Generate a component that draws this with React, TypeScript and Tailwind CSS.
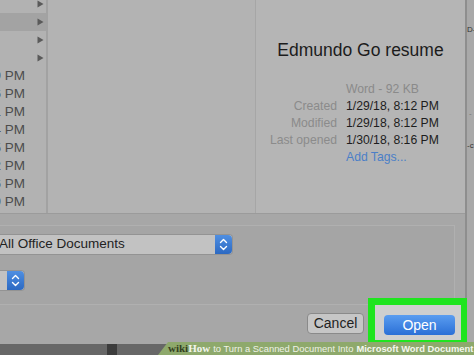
import React from 'react';

// left browser column: 4 folder rows + 8 file rows (only the tail of the date shows)
const folderRows = [false, true, false, false];
const timeRows = ['8:49 PM', '5:36 PM', '4:11 PM', '2:44 PM', '7:25 PM', '3:52 PM', '6:16 PM', '1:59 PM'];

const meta = [
  { label: 'Created', value: '1/29/18, 8:12 PM' },
  { label: 'Modified', value: '1/29/18, 8:12 PM' },
  { label: 'Last opened', value: '1/30/18, 8:16 PM' },
];

const Stepper = () => (
  <div className="w-[17px] h-full rounded-r-[4px] bg-gradient-to-b from-[#4f8fe2] to-[#2c69c2] flex items-center justify-center">
    <svg width="9" height="13" viewBox="0 0 9 13" fill="none" stroke="#ffffff" strokeWidth="1.4" strokeLinecap="round" strokeLinejoin="round">
      <path d="M1.5 4.5 L4.5 1.5 L7.5 4.5" />
      <path d="M1.5 8.5 L4.5 11.5 L7.5 8.5" />
    </svg>
  </div>
);

const Arrow = () => (
  <svg width="7" height="8" viewBox="0 0 7 8">
    <path d="M0.5 0.5 L6.5 4 L0.5 7.5 Z" fill="#5a5a5a" />
  </svg>
);

export default function App() {
  return (
    <div className="relative w-[474px] h-[355px] overflow-hidden bg-[#656565] font-['Liberation_Sans',Arial,sans-serif]">
      <div className="flex h-[344px]">
        {/* dialog */}
        <div className="w-[467px] flex flex-col border-r-2 border-[#8e8e8e]">
          <div className="h-[214px] flex border-b border-[#9b9b9b] bg-[#b4b4b4]">
            <div className="w-[48px] border-r-2 border-[#a2a2a2] bg-[#b2b2b2] overflow-hidden">
              <div className="mt-[-5px]">
                {folderRows.map((sel, i) => (
                  <div key={i} className={`h-[18px] flex items-center justify-end pr-[2px] ${sel ? 'bg-[#a3a3a3]' : ''}`}>
                    <Arrow />
                  </div>
                ))}
                {timeRows.map((t, i) => (
                  <div key={i} className="h-[18px] flex items-center justify-end pr-[21px] text-[13.5px] text-[#4c4c4c] whitespace-nowrap">
                    {'1/29/18, ' + t}
                  </div>
                ))}
              </div>
            </div>
            <div className="w-[208px] border-r border-[#a6a6a6] bg-[#b3b3b3]" />
            <div className="flex-1 bg-[#b5b5b5] flex flex-col items-center">
              <div className="mt-[40px] h-[20px] leading-[20px] text-[17.5px] text-[#1c1c1c] whitespace-nowrap">
                Edmundo Go resume
              </div>
              <div className="self-start mt-[21px] grid grid-cols-[81px_auto] gap-x-[9px] text-[12.2px] leading-[17px] whitespace-nowrap">
                <div />
                <div className="text-[#8a8a8a]">Word - 92 KB</div>
                {meta.map((m) => (
                  <React.Fragment key={m.label}>
                    <div className="text-right text-[#8b8b8b]">{m.label}</div>
                    <div className="text-[#1d1d1d]">{m.value}</div>
                  </React.Fragment>
                ))}
                <div />
                <div className="text-[#4b7fc7]">Add Tags...</div>
              </div>
            </div>
          </div>

          <div className="flex-1 bg-[#a7a7a7] flex flex-col">
            <div className="mt-[11px] w-[455px] h-[80px] bg-[#a5a5a5] border border-l-0 border-[#b0b0b0] flex flex-col">
              <div className="mt-[8px] w-[233px] h-[21px] flex bg-[#c2c2c2] border border-l-0 border-[#939393] rounded-r-[4px]">
                <div className="flex-1 flex items-center text-[13.5px] text-[#222222] whitespace-nowrap ml-[-1px]">
                  All Office Documents
                </div>
                <Stepper />
              </div>
              <div className="mt-[15px] w-[25px] h-[21px] flex bg-[#c2c2c2] border border-l-0 border-[#939393] rounded-r-[4px]">
                <div className="flex-1" />
                <Stepper />
              </div>
            </div>
            <div className="flex items-start mt-[8px] pr-[10px] justify-end gap-[20px]">
              <div className="w-[57px] h-[21px] rounded-[4px] bg-[#c6c6c6] border border-[#8a8a8a] flex items-center justify-center text-[14px] text-[#222222]">
                Cancel
              </div>
              <div className="relative mt-[2px]">
                <span className="absolute left-[-16px] right-[-13px] top-[-17px] bottom-[-8px] border-[7px] border-b-[3px] border-[#1fe51f] bg-[#cfcfcf]" />
                <div className="relative w-[71px] h-[20px] rounded-[4px] bg-gradient-to-b from-[#5b9df0] to-[#2a6fd6] flex items-center justify-center text-[14px] text-white">
                  Open
                </div>
              </div>
            </div>
          </div>
        </div>
        {/* background window peeking out on the right */}
        <div className="flex-1 bg-[#a9a9a9] relative text-[8px] text-[#333333]">
          <span className="absolute top-[24px] left-[0px]">D-</span>
          <span className="absolute top-[108px] left-[2px] text-[#777777]">-</span>
          <span className="absolute top-[140px] left-[0px]">-c</span>
        </div>
      </div>

      {/* bottom strip */}
      <div className="h-[11px] bg-[#676767] flex">
        <div className="ml-[107px] w-[10px] bg-[#3c3c3c]" />
      </div>

      {/* wikiHow banner */}
      <div className="absolute left-[158px] right-0 bottom-0 h-[13px] bg-[#8ea96c] [clip-path:polygon(10px_0,100%_0,100%_100%,0_100%)] flex items-center pl-[10px] whitespace-nowrap text-[9.4px] leading-[13px]">
        <span className="font-['Liberation_Serif',serif] font-bold text-[#34401f] text-[11px]">wiki</span>
        <span className="font-['Liberation_Serif',serif] font-bold text-[#f2f5ec] text-[11px]">How</span>
        <span className="text-[#eef2e6] ml-[3px]">to Turn a Scanned Document Into </span>
        <span className="text-[#f4f7ef] font-bold ml-[3px]">Microsoft Word Document</span>
      </div>
    </div>
  );
}
